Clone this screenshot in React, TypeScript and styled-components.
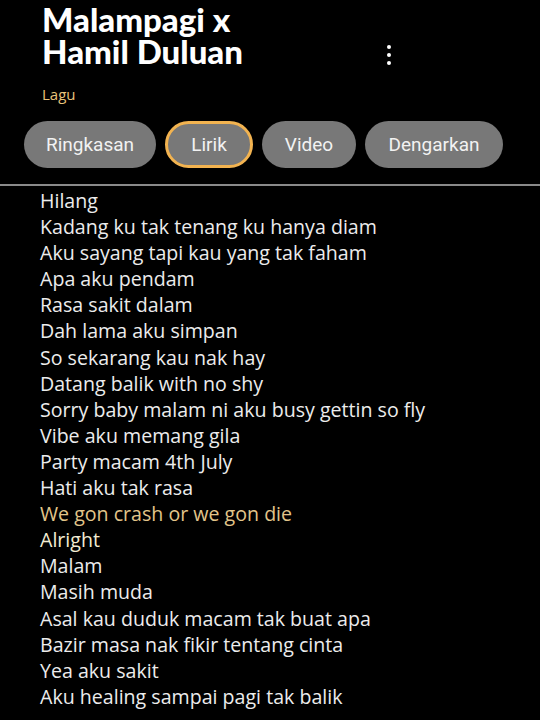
import styled, { createGlobalStyle } from "styled-components";

const GlobalStyle = createGlobalStyle`
  html, body {
    margin: 0;
    padding: 0;
    background: #000;
  }
  body {
    font-family: "Open Sans", "Liberation Sans", sans-serif;
    color: #ececec;
  }
`;

const Screen = styled.div`
  width: 540px;
  height: 720px;
  overflow: hidden;
  background: #000;
  display: flex;
  flex-direction: column;
`;

const Header = styled.header`
  display: flex;
  align-items: flex-end;
  padding: 0 0 0 42px;
`;

const Title = styled.h1`
  margin: 0;
  width: 330px;
  font-family: "Lato", "Open Sans", sans-serif;
  font-weight: 900;
  font-size: 33px;
  line-height: 32px;
  color: #fff;
  padding-top: 3px;
`;

const MoreButton = styled.div`
  display: flex;
  flex-direction: column;
  gap: 4px;
  margin: 0 0 2px 15px;
  span {
    width: 4px;
    height: 4px;
    border-radius: 50%;
    background: #fff;
  }
`;

const Category = styled.div`
  margin: 17px 0 0 42px;
  font-size: 15px;
  color: #e8c37a;
  height: 22px;
`;

const Tabs = styled.nav`
  display: flex;
  gap: 9px;
  padding: 15px 0 0 24px;
  height: 62px;
  box-sizing: border-box;
`;

const Tab = styled.div<{ active?: boolean; w: number }>`
  width: ${(p) => p.w}px;
  height: 47px;
  box-sizing: border-box;
  border-radius: 24px;
  background: #787878;
  border: ${(p) => (p.active ? "3px solid #f2b350" : "none")};
  display: flex;
  align-items: center;
  justify-content: center;
  font-family: "Roboto", sans-serif;
  font-size: 19px;
  color: #f2f2f2;
`;

const Divider = styled.hr`
  margin: 16px 0 0 0;
  border: none;
  height: 2px;
  background: #8a8a8a;
`;

const Lyrics = styled.div`
  padding: 2px 0 0 40px;
  display: flex;
  flex-direction: column;
`;

const Line = styled.div<{ tone?: "gold" | "cream" }>`
  font-size: 19.6px;
  line-height: 26.1px;
  white-space: nowrap;
  color: ${(p) =>
    p.tone === "gold" ? "#e2c58a" : p.tone === "cream" ? "#f3ecd2" : "#ececec"};
`;

const lines: { text: string; tone?: "gold" | "cream" }[] = [
  { text: "Hilang" },
  { text: "Kadang ku tak tenang ku hanya diam" },
  { text: "Aku sayang tapi kau yang tak faham" },
  { text: "Apa aku pendam" },
  { text: "Rasa sakit dalam" },
  { text: "Dah lama aku simpan" },
  { text: "So sekarang kau nak hay" },
  { text: "Datang balik with no shy" },
  { text: "Sorry baby malam ni aku busy gettin so fly" },
  { text: "Vibe aku memang gila" },
  { text: "Party macam 4th July" },
  { text: "Hati aku tak rasa" },
  { text: "We gon crash or we gon die", tone: "gold" },
  { text: "Alright", tone: "cream" },
  { text: "Malam" },
  { text: "Masih muda" },
  { text: "Asal kau duduk macam tak buat apa" },
  { text: "Bazir masa nak fikir tentang cinta" },
  { text: "Yea aku sakit" },
  { text: "Aku healing sampai pagi tak balik" },
];

const tabs = [
  { label: "Ringkasan", w: 132 },
  { label: "Lirik", w: 88, active: true },
  { label: "Video", w: 94 },
  { label: "Dengarkan", w: 138 },
];

export default function App() {
  return (
    <Screen>
      <GlobalStyle />
      <Header>
        <Title>
          Malampagi x
          <br />
          Hamil Duluan
        </Title>
        <MoreButton>
          <span />
          <span />
          <span />
        </MoreButton>
      </Header>
      <Category>Lagu</Category>
      <Tabs>
        {tabs.map((t) => (
          <Tab key={t.label} w={t.w} active={t.active}>
            {t.label}
          </Tab>
        ))}
      </Tabs>
      <Divider />
      <Lyrics>
        {lines.map((l, i) => (
          <Line key={i} tone={l.tone}>
            {l.text}
          </Line>
        ))}
      </Lyrics>
    </Screen>
  );
}
